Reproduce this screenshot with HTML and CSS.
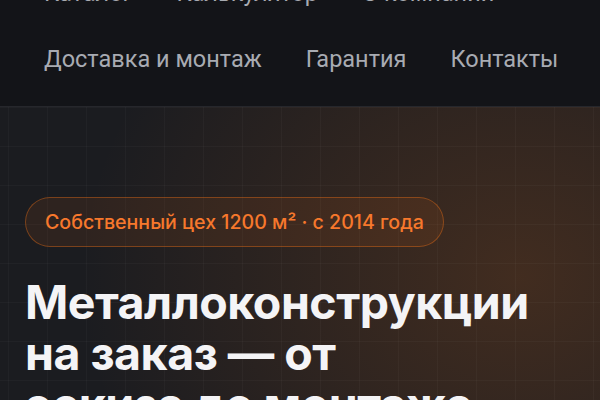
FILE: index.html
```html
<!DOCTYPE html>
<html lang="ru">
<head>
<meta charset="utf-8">
<title>Металлоконструкции</title>
<link rel="stylesheet" href="styles.css">
</head>
<body>
<header class="header">
  <nav class="nav">
    <a class="nav-link" href="#">Каталог</a>
    <a class="nav-link" href="#">Калькулятор</a>
    <a class="nav-link" href="#">О компании</a>
    <a class="nav-link" href="#">Доставка и монтаж</a>
    <a class="nav-link" href="#">Гарантия</a>
    <a class="nav-link" href="#">Контакты</a>
  </nav>
</header>
<section class="hero">
  <div class="badge">Собственный цех 1200 м² · с 2014 года</div>
  <h1 class="title">Металлоконструкции на заказ — от<br>эскиза до монтажа</h1>
</section>
</body>
</html>
```

FILE: styles.css
```css
html, body {
  margin: 0;
  padding: 0;
  background: #1b1c20;
}
body {
  width: 600px;
  overflow: hidden;
  font-family: Inter, "Noto Sans", sans-serif;
}
.header {
  background: #131418;
  border-bottom: 1px solid #26272c;
  margin-top: -40px;
  padding: 0 20px 34px 44px;
}
.nav {
  display: flex;
  flex-wrap: wrap;
  column-gap: 44px;
  row-gap: 40px;
  padding-top: 20px;
}
.nav-link {
  font-family: Roboto, "Liberation Sans", sans-serif;
  font-size: 23.5px;
  line-height: 26px;
  color: #a8abb2;
  text-decoration: none;
}
.hero {
  padding: 90px 25px 60px 25px;
  background-color: #1b1c20;
  background-image:
    linear-gradient(rgba(255,255,255,0.028) 1px, transparent 1px),
    linear-gradient(90deg, rgba(255,255,255,0.028) 1px, transparent 1px),
    radial-gradient(440px 380px at 520px 170px, rgba(220,110,30,0.20), rgba(220,110,30,0.10) 50%, rgba(220,110,30,0) 100%);
  background-size: 39px 39px, 39px 39px, 100% 100%;
  background-position: 0 0, 8px 0, 0 0;
}
.badge {
  display: inline-block;
  padding: 11px 19px;
  border: 1px solid rgba(249,115,22,0.38);
  border-radius: 999px;
  background: rgba(249,115,22,0.09);
  color: #f7782c;
  font-size: 19.6px;
  font-weight: 500;
  line-height: 26px;
}
.title {
  margin: 30px 0 0 0;
  color: #f4f4f6;
  font-size: 46.5px;
  font-weight: 700;
  line-height: 51px;
  letter-spacing: -0.5px;
  max-width: 540px;
}
```
